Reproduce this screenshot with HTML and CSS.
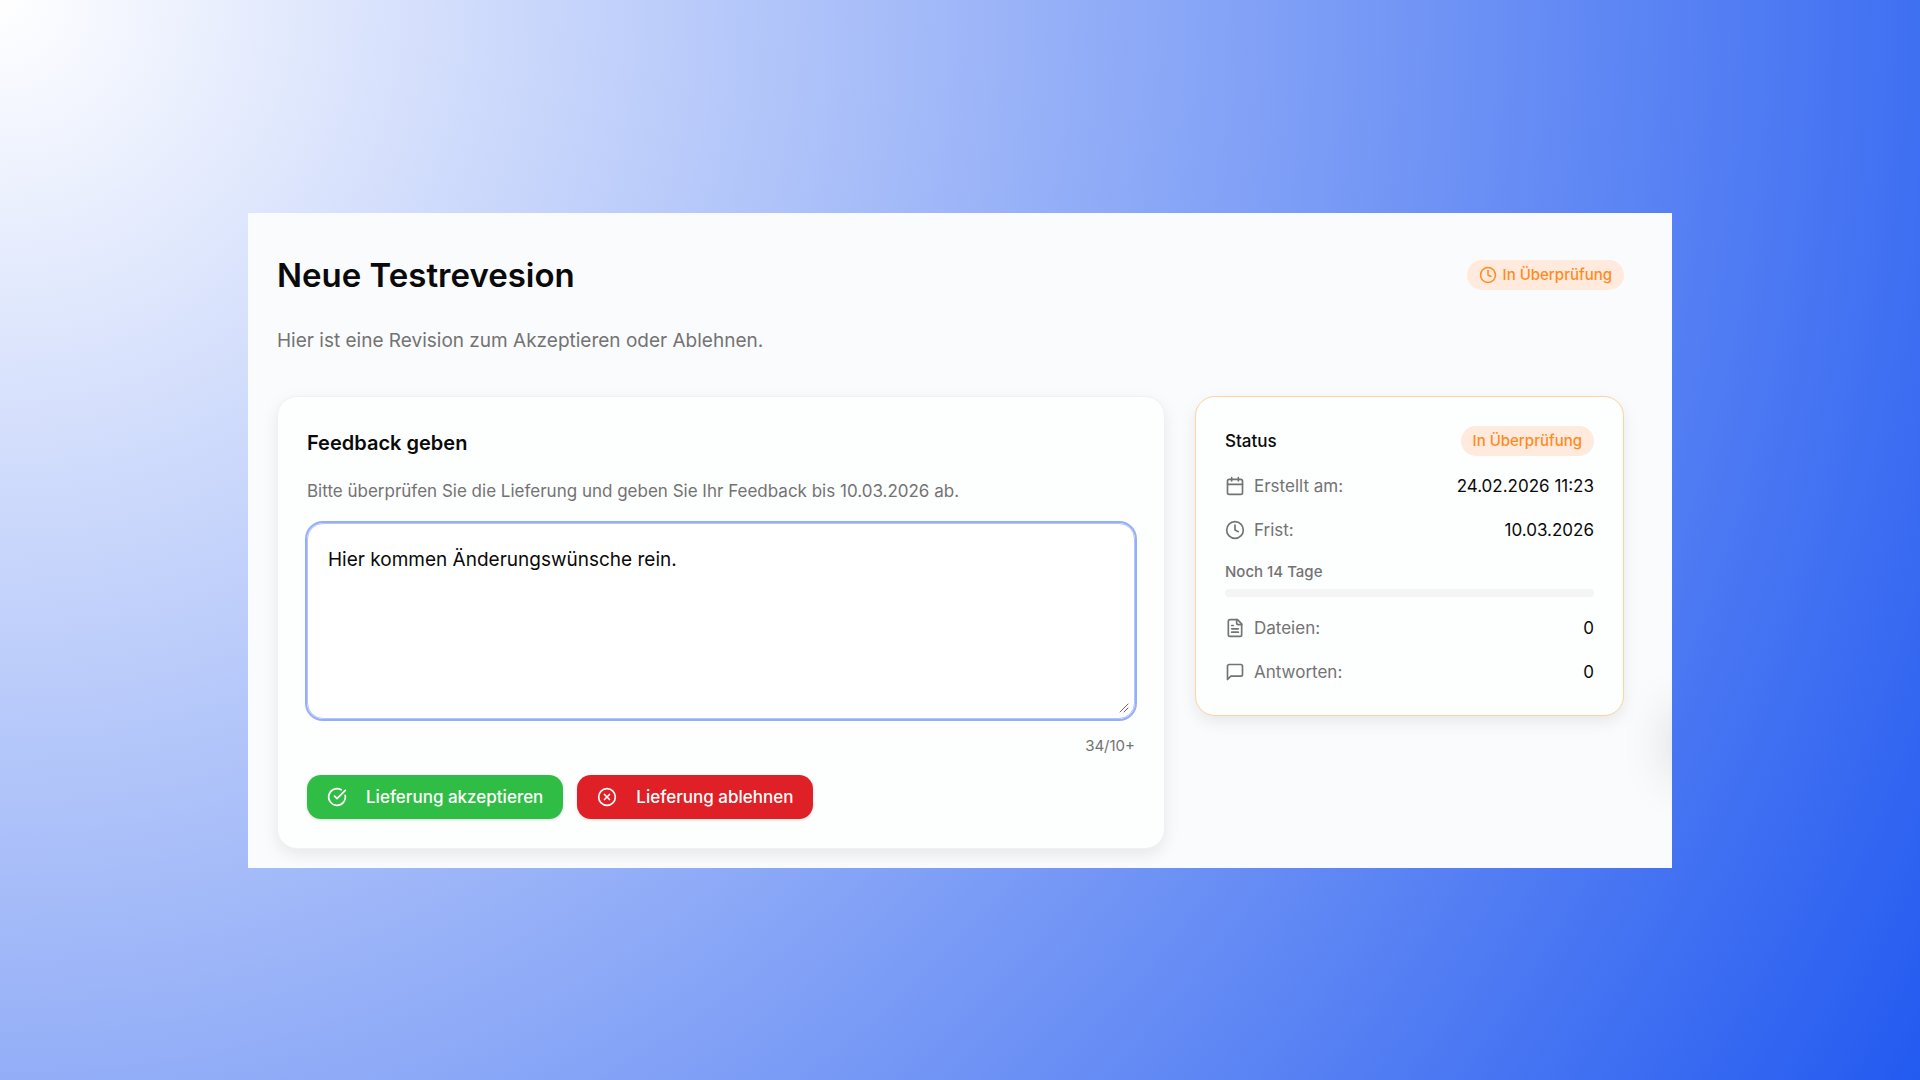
FILE: index.html
```html
<!DOCTYPE html>
<html lang="de">
<head>
<meta charset="utf-8">
<meta name="viewport" content="width=device-width, initial-scale=1">
<title>Neue Testrevesion</title>
<link rel="stylesheet" href="styles.css">
</head>
<body>
<main class="panel">
  <header class="header">
    <div class="title-row">
      <h1 class="title">Neue Testrevesion</h1>
      <span class="badge badge-icon">
        <svg class="icon" viewBox="0 0 24 24"><circle cx="12" cy="12" r="10"/><path d="M12 6v6l4 2"/></svg>
        In Überprüfung
      </span>
    </div>
    <p class="subtitle">Hier ist eine Revision zum Akzeptieren oder Ablehnen.</p>
  </header>
  <div class="columns">
    <form class="card feedback">
      <h2 class="card-title">Feedback geben</h2>
      <label class="hint" for="feedback">Bitte überprüfen Sie die Lieferung und geben Sie Ihr Feedback bis 10.03.2026 ab.</label>
      <div class="field">
        <textarea class="textarea" id="feedback">Hier kommen Änderungswünsche rein.</textarea>
        <svg class="grip" viewBox="0 0 10 10"><path d="M1 9 9 1M5 9 9 5"/></svg>
      </div>
      <p class="counter">34/10+</p>
      <div class="actions">
        <button class="button accept" type="button">
          <svg class="icon" viewBox="0 0 24 24"><path d="M21.801 10A10 10 0 1 1 17 3.335"/><path d="m9 11 3 3L22 4"/></svg>
          Lieferung akzeptieren
        </button>
        <button class="button reject" type="button">
          <svg class="icon" viewBox="0 0 24 24"><circle cx="12" cy="12" r="10"/><path d="m15 9-6 6"/><path d="m9 9 6 6"/></svg>
          Lieferung ablehnen
        </button>
      </div>
    </form>
    <aside class="card status">
      <div class="row">
        <h2 class="status-title">Status</h2>
        <span class="badge">In Überprüfung</span>
      </div>
      <div class="row">
        <span class="label"><svg class="icon" viewBox="0 0 24 24"><path d="M8 2v4"/><path d="M16 2v4"/><rect width="18" height="18" x="3" y="4" rx="2"/><path d="M3 10h18"/></svg>Erstellt am:</span>
        <span class="value">24.02.2026 11:23</span>
      </div>
      <div class="row">
        <span class="label"><svg class="icon" viewBox="0 0 24 24"><circle cx="12" cy="12" r="10"/><path d="M12 6v6l4 2"/></svg>Frist:</span>
        <span class="value">10.03.2026</span>
      </div>
      <div class="remaining">
        <p class="remaining-text">Noch 14 Tage</p>
        <div class="track"></div>
      </div>
      <div class="row">
        <span class="label"><svg class="icon" viewBox="0 0 24 24"><path d="M15 2H6a2 2 0 0 0-2 2v16a2 2 0 0 0 2 2h12a2 2 0 0 0 2-2V7Z"/><path d="M14 2v4a2 2 0 0 0 2 2h4"/><path d="M10 9H8"/><path d="M16 13H8"/><path d="M16 17H8"/></svg>Dateien:</span>
        <span class="value">0</span>
      </div>
      <div class="row">
        <span class="label"><svg class="icon" viewBox="0 0 24 24"><path d="M21 15a2 2 0 0 1-2 2H7l-4 4V5a2 2 0 0 1 2-2h14a2 2 0 0 1 2 2z"/></svg>Antworten:</span>
        <span class="value">0</span>
      </div>
    </aside>
  </div>
  <div class="edge-shadow"></div>
</main>
</body>
</html>
```
FILE: styles.css
```css
* {
  box-sizing: border-box;
}

body {
  margin: 0;
  min-height: 100vh;
  padding: 0 248px;
  display: flex;
  align-items: center;
  font-family: Inter, "Liberation Sans", sans-serif;
  color: #0a0a0a;
  background: radial-gradient(circle farthest-corner at 0 0, #ffffff, #235af0);
}

h1,
h2,
p {
  margin: 0;
}

.panel {
  position: relative;
  flex: 1;
  min-width: 0;
  overflow: hidden;
  padding: 40px 48px 19px 29px;
  background: #fafbfd;
}

.header {
  display: flex;
  flex-direction: column;
  gap: 28px;
  margin-bottom: 39px;
}

.title-row {
  display: flex;
  align-items: center;
  justify-content: space-between;
  height: 44px;
}

.title {
  font-size: 33px;
  line-height: 44px;
  font-weight: 600;
}

.subtitle {
  font-size: 19px;
  line-height: 32px;
  color: #737373;
}

.icon {
  flex: none;
  width: 20px;
  height: 20px;
  fill: none;
  stroke: currentColor;
  stroke-width: 2;
  stroke-linecap: round;
  stroke-linejoin: round;
}

.badge {
  display: flex;
  align-items: center;
  gap: 6px;
  padding: 0 12px;
  border-radius: 15px;
  font-size: 15px;
  line-height: 30px;
  font-weight: 500;
  color: #ff8a1f;
  background: #ffeadd;
}

.badge-icon .icon {
  width: 18px;
  height: 18px;
}

.columns {
  display: grid;
  grid-template-columns: minmax(0, 888fr) minmax(0, 429fr);
  gap: 30px;
  align-items: start;
}

.card {
  border: 1px solid #f1f1f3;
  border-radius: 20px;
  background: #fdfefe;
  box-shadow: 0 6px 16px rgba(0, 0, 0, 0.08);
}

.feedback {
  display: flex;
  flex-direction: column;
  padding: 29px;
}

.card-title {
  font-size: 20px;
  line-height: 34px;
  font-weight: 600;
}

.hint {
  margin: 17px 0 18px;
  font-size: 17px;
  line-height: 28px;
  color: #737373;
}

.field {
  position: relative;
}

.textarea {
  display: block;
  width: 100%;
  height: 196px;
  padding: 20px;
  border: 1px solid #b4c5f6;
  border-radius: 16px;
  outline: 2px solid #94aefa;
  font-family: inherit;
  font-size: 19px;
  line-height: 32px;
  color: #0a0a0a;
  background: #ffffff;
  resize: none;
}

.grip {
  position: absolute;
  right: 6px;
  bottom: 6px;
  width: 10px;
  height: 10px;
  fill: none;
  stroke: #6b6b6b;
  stroke-width: 1;
  stroke-linecap: round;
}

.counter {
  margin: 17px 0 19px;
  font-size: 15px;
  line-height: 20px;
  text-align: right;
  color: #737373;
}

.actions {
  display: flex;
  gap: 14px;
}

.button {
  display: flex;
  align-items: center;
  gap: 19px;
  height: 44px;
  padding: 0 20px;
  border: 0;
  border-radius: 14px;
  font-family: inherit;
  font-size: 17px;
  font-weight: 500;
  color: #ffffff;
  box-shadow: 0 1px 3px rgba(0, 0, 0, 0.15);
}

.accept {
  background: #30bd45;
}

.reject {
  background: #df2026;
}

.status {
  display: flex;
  flex-direction: column;
  gap: 16px;
  padding: 29px;
  border-color: #fdd3a0;
}

.row {
  display: flex;
  align-items: center;
  justify-content: space-between;
  line-height: 28px;
  font-size: 17px;
}

.status-title {
  font-size: 17px;
  font-weight: 500;
}

.label {
  display: flex;
  align-items: center;
  gap: 9px;
  color: #737373;
}

.remaining {
  display: flex;
  flex-direction: column;
  gap: 5px;
  padding-bottom: 1px;
}

.remaining-text {
  font-size: 15px;
  line-height: 24px;
  font-weight: 500;
  color: #737373;
}

.track {
  height: 8px;
  border-radius: 4px;
  background: #f4f4f5;
}

.edge-shadow {
  position: absolute;
  left: 100%;
  bottom: 90px;
  width: 68px;
  height: 68px;
  border-radius: 16px;
  box-shadow: 0 0 52px rgba(0, 0, 0, 0.15);
}
```
